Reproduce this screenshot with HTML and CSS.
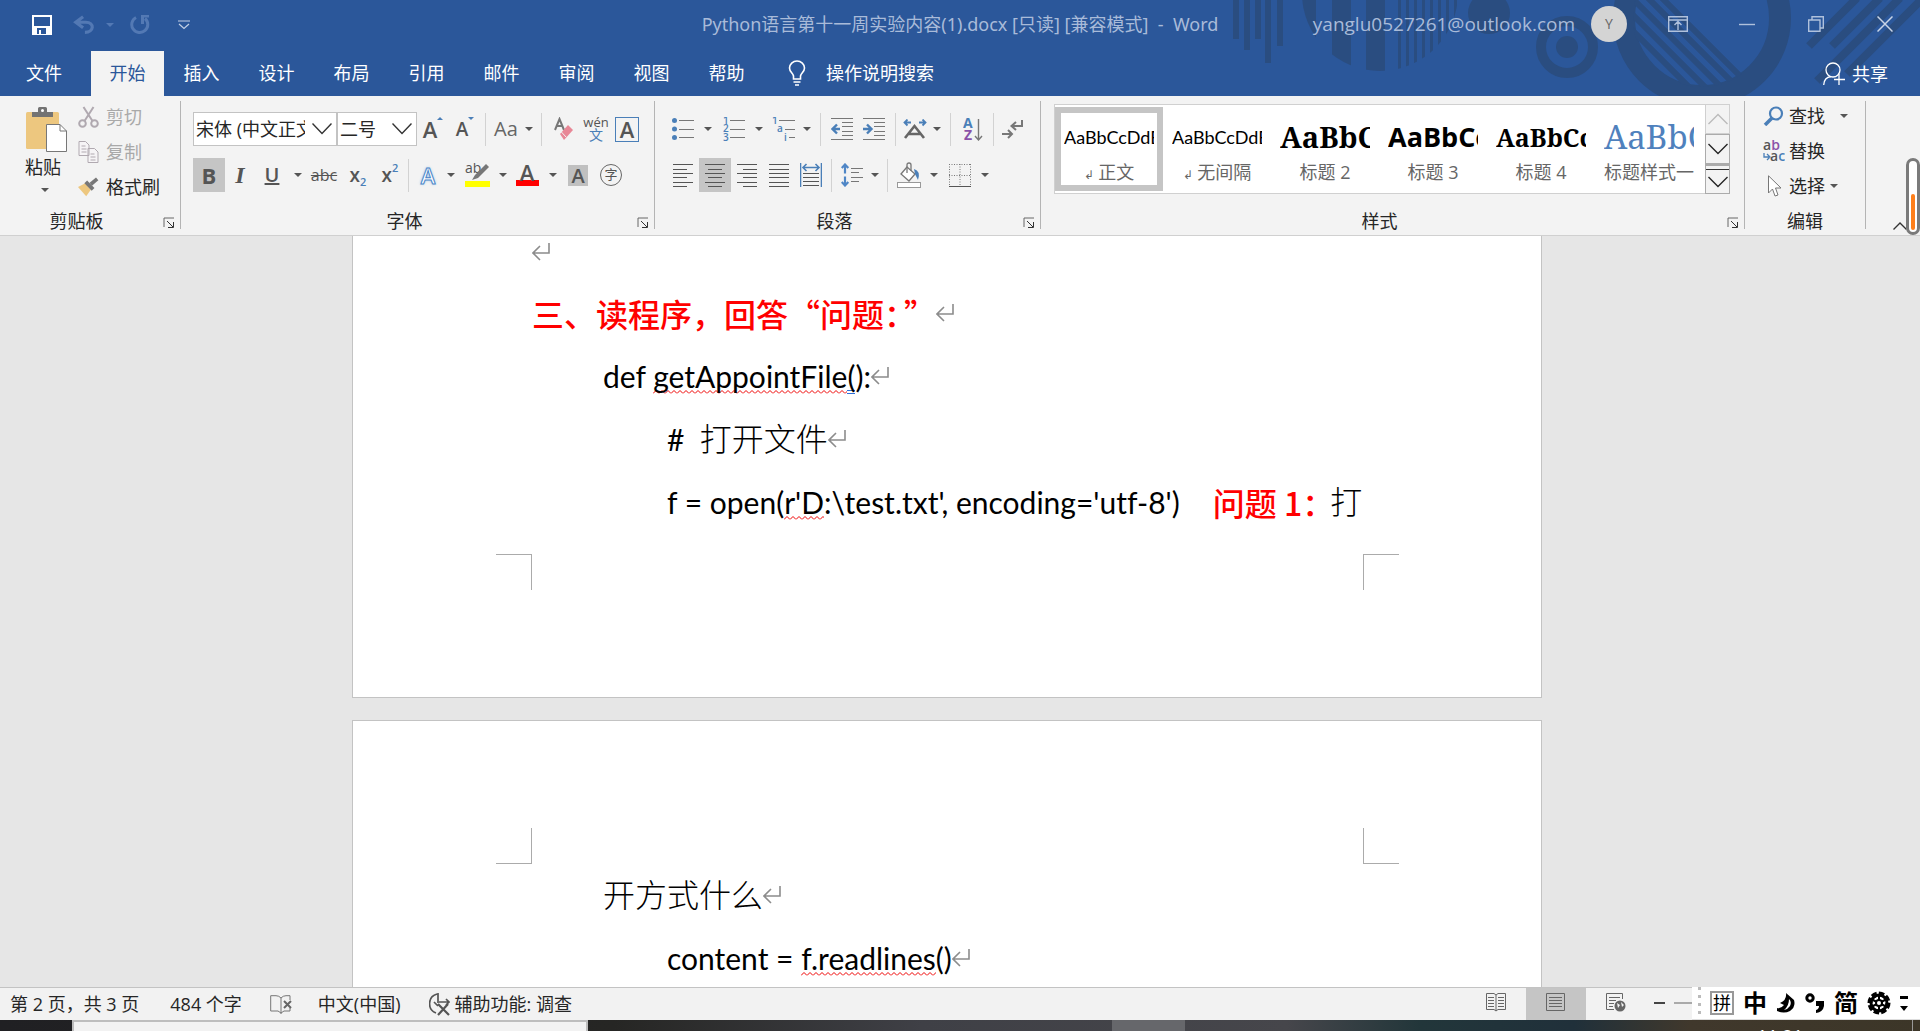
FILE: index.html
```html
<!DOCTYPE html>
<html lang="zh-CN">
<head>
<meta charset="utf-8">
<title>Python语言第十一周实验内容(1).docx - Word</title>
<link rel="stylesheet" href="styles.css">
</head>
<body>
<svg class="defs" aria-hidden="true">
  <symbol id="launcher" viewBox="0 0 12 12"><path d="M1 10V1H11" fill="none" stroke="#666"/><path d="M4 4L10 10M10.500 5V10.500H5" fill="none" stroke="#333"/></symbol>
  <symbol id="ret" viewBox="0 0 18 18"><path d="M17 0V10H2M8 3L1 10L8 17" fill="none" stroke="#8c8c8c" stroke-width="1.600"/></symbol>
  <symbol id="down" viewBox="0 0 20 12"><path d="M0.500 1L10 10.500L19.500 1" fill="none" stroke="currentColor" stroke-width="1.400"/></symbol>
</svg>

<header class="top">
  <svg class="art" width="700" height="96" viewBox="1220 0 700 96" aria-hidden="true">
    <defs>
      <clipPath id="c1"><circle cx="1380" cy="-7" r="78"/></clipPath>
      <clipPath id="c2"><circle cx="1702" cy="18" r="69"/></clipPath>
    </defs>
    <g fill="#2a4d80">
      <path d="M1233 0h6v39h-6zM1244 0h6v50h-6zM1255 0h6v39h-6zM1265 0h6v63h-6zM1277 0h6v46h-6z"/>
      <path clip-path="url(#c1)" d="M1302 0h14v90h-14zM1332 0h19v90h-19zM1366 0h19v90h-19zM1398 0h3v90h-3zM1406 0h3v90h-3zM1414 0h3v90h-3zM1422 0h3v90h-3zM1430 0h3v90h-3zM1438 0h3v90h-3zM1446 0h3v90h-3zM1454 0h3v90h-3z"/>
      <circle cx="1489" cy="13" r="21"/>
      <circle cx="1567" cy="47" r="11"/>
    </g>
    <g fill="none" stroke="#2a4d80">
      <circle cx="1567" cy="47" r="26" stroke-width="10"/>
      <circle cx="1702" cy="18" r="78" stroke-width="22"/>
      <path clip-path="url(#c2)" stroke-width="6" d="M1650 -14l110 110M1620 -30l120 120M1610 -24l120 120M1610 -8l110 110M1610 8l100 100"/>
      <path stroke-width="8" d="M1809 46L1857 -2M1832 46L1880 -2M1817 81L1900 -2M1847 74L1923 -2"/>
    </g>
  </svg>
  <div class="titlebar">
    <div class="qat">
      <button class="qbtn q-save" aria-label="保存"><svg width="20" height="20" viewBox="0 0 20 20"><path d="M1 1H19V19H1Z" fill="none" stroke="#fff" stroke-width="2"/><path d="M2 11H18V19H2Z" fill="#fff"/><path d="M5 13h9v6h-5v-4h-2v4h-2z" fill="#2b579a"/></svg></button>
      <button class="qbtn q-undo" aria-label="撤消"><svg width="22" height="20" viewBox="0 0 24 20"><path d="M11 1L3 7L11 13M3 7H14C24 7 23 18 13 18" fill="none" stroke="#5379b4" stroke-width="3.500"/></svg><span class="caret faint"></span></button>
      <button class="qbtn q-redo" aria-label="重复"><svg width="20" height="20" viewBox="0 0 20 20"><path d="M6 2.500A8 8 0 1 0 15 3.500" fill="none" stroke="#5379b4" stroke-width="3"/><path d="M11 1H19M12.500 1V9" fill="none" stroke="#5379b4" stroke-width="3"/></svg></button>
      <button class="qbtn q-more" aria-label="自定义快速访问工具栏"><svg width="12" height="10" viewBox="0 0 12 10"><path d="M0 1H12M1 4L6 8.500L11 4" fill="none" stroke="#c3d0e5" stroke-width="1.200"/></svg></button>
    </div>
    <div class="doc-title">Python语言第十一周实验内容(1).docx [只读] [兼容模式]&nbsp; -&nbsp; Word</div>
    <div class="right">
      <div class="account"><span>yanglu0527261@outlook.com</span><span class="avatar">Y</span></div>
      <div class="winbtns">
        <button aria-label="功能区显示选项"><svg width="20" height="16" viewBox="0 0 20 16"><path d="M.7 .7H19.300V15.300H.7ZM.7 4H19.300M10 14V6M6.500 9L10 5.500L13.500 9" fill="none" stroke="#b0c1dc" stroke-width="1.400"/></svg></button>
        <button aria-label="最小化"><svg width="16" height="16" viewBox="0 0 16 16"><path d="M0 8.500H16" stroke="#b0c1dc" stroke-width="1.400"/></svg></button>
        <button aria-label="还原"><svg width="16" height="16" viewBox="0 0 16 16"><path d="M.7 4H12V15.300H.7ZM4 4V.7H15.300V12H12" fill="none" stroke="#b0c1dc" stroke-width="1.400"/></svg></button>
        <button aria-label="关闭"><svg width="16" height="16" viewBox="0 0 16 16"><path d="M.5 .5L15.500 15.500M15.500 .5L.5 15.500" stroke="#c8d4e7" stroke-width="1.500"/></svg></button>
      </div>
    </div>
  </div>
  <nav class="tabs">
    <button class="tab file">文件</button><button class="tab active">开始</button><button class="tab">插入</button><button class="tab">设计</button><button class="tab">布局</button><button class="tab">引用</button><button class="tab">邮件</button><button class="tab">审阅</button><button class="tab">视图</button><button class="tab">帮助</button>
    <button class="tell"><svg width="18" height="26" viewBox="0 0 18 26"><path d="M5.500 19V16C5 13 1.500 12 1.500 8A7.500 7 0 0 1 16.500 8C16.500 12 13 13 12.500 16V19ZM5.500 22H12.500M7 25H11" fill="none" stroke="#fff" stroke-width="1.600"/></svg>操作说明搜索</button>
    <button class="share"><svg width="22" height="24" viewBox="0 0 22 24"><circle cx="10" cy="8" r="7" fill="none" stroke="#fff" stroke-width="1.300"/><path d="M.7 23C1 18 4 15 8 14.500M16 12V23M11 17.500H22" fill="none" stroke="#fff" stroke-width="1.300"/></svg>共享</button>
  </nav>
</header>

<section class="ribbon">
  <div class="group g-clip">
    <div class="body clip">
      <button class="paste"><svg width="42" height="46" viewBox="0 0 42 46"><rect x="0" y="5" width="33" height="37" rx="1.500" fill="#edc77f"/><path d="M6 10V5H12V1.500Q12 0 13.500 0H19.500Q21 0 21 1.500V5H27V10Z" fill="#737373"/><circle cx="16.500" cy="3.500" r="1.500" fill="#fff"/><path d="M20.500 17.500H34L40.500 24V44.500H20.500Z" fill="#fff" stroke="#777"/><path d="M34 17.500V24H40.500" fill="none" stroke="#777"/></svg><span>粘贴</span><span class="caret"></span></button>
      <div class="clip-list">
        <button class="cmd off"><svg width="20" height="22" viewBox="0 0 20 22"><g fill="none" stroke="#b0a9b0" stroke-width="2"><circle cx="4" cy="17.500" r="3.300"/><circle cx="16" cy="17.500" r="3.300"/><path d="M5 1L14 15M15 1L6 15"/></g></svg>剪切</button>
        <button class="cmd off"><svg width="20" height="22" viewBox="0 0 20 22"><g fill="#f6f4f6" stroke="#b0a9b0"><path d="M.5 .5H7L10.500 4V14.500H.5ZM9.500 7.500H16L19.500 11V21.500H9.500Z"/><path d="M3 5H7M3 8H8M3 11H8M12 13H16M12 16H17M12 19H17"/></g></svg>复制</button>
        <button class="cmd"><svg width="23" height="20" viewBox="0 0 23 20"><path d="M0 10L8 6L14 13L9 20Z" fill="#edc77f"/><path d="M7 6L10 3L18 11L15 14Z" fill="#777"/><path d="M14 7L21 1" stroke="#777" stroke-width="4"/></svg>格式刷</button>
      </div>
    </div>
    <div class="label">剪贴板<button class="launch" aria-label="剪贴板选项"><svg width="12" height="12"><use href="#launcher"/></svg></button></div>
  </div>

  <div class="group g-font">
    <div class="body rows">
      <div class="row">
        <select class="combo c-name" aria-label="字体"><option>宋体 (中文正文)</option></select><select class="combo c-size" aria-label="字号"><option>二号</option></select>
        <button class="tool w32 big" aria-label="增大字号">A<i class="up"></i></button>
        <button class="tool w32 mid" aria-label="减小字号">A<i class="dn"></i></button>
        <span class="sep w8"></span>
        <button class="tool w34 aa">Aa</button><button class="tool w12" aria-label="更改大小写选项"><span class="caret"></span></button>
        <span class="sep w12"></span>
        <button class="tool w34" aria-label="清除所有格式"><svg width="20" height="24" viewBox="0 0 20 24"><path d="M1 13L5.500 2L10 13M3 9H8" fill="none" stroke="#777" stroke-width="2"/><path d="M6 17L14 8L19 13L10 23Z" fill="#e88796"/><path d="M6.500 14L12 20" stroke="#f2f2f2"/></svg></button>
        <button class="tool w30 wen"><span>wén</span><b>文</b></button>
        <button class="tool w32" aria-label="字符边框"><span class="abox">A</span></button>
      </div>
      <div class="row">
        <button class="tool w32 on bold">B</button>
        <button class="tool w30 ital">I</button>
        <button class="tool w34 und">U</button><button class="tool w18" aria-label="下划线选项"><span class="caret"></span></button>
        <button class="tool w34 strike">abc</button>
        <button class="tool w34 xs">x<sub>2</sub></button>
        <button class="tool w30 xs">x<sup>2</sup></button>
        <span class="sep w6"></span>
        <button class="tool w34 glow">A</button><button class="tool w12" aria-label="文本效果选项"><span class="caret"></span></button>
        <button class="tool w40" aria-label="突出显示"><svg width="25" height="24" viewBox="0 0 25 24"><text x="0" y="10" class="ic-ab">ab</text><path d="M7 17L10 12L21 1L24 4L13 15Z" fill="#777"/><path d="M0 18H25V24H0Z" fill="#ff0"/></svg></button><button class="tool w12" aria-label="突出显示选项"><span class="caret"></span></button>
        <button class="tool w36 fcolor">A</button><button class="tool w16" aria-label="字体颜色选项"><span class="caret"></span></button>
        <button class="tool w34"><span class="shade">A</span></button>
        <button class="tool w32"><span class="circ">字</span></button>
      </div>
    </div>
    <div class="label">字体<button class="launch" aria-label="字体选项"><svg width="12" height="12"><use href="#launcher"/></svg></button></div>
  </div>

  <div class="group g-para">
    <div class="body rows">
      <div class="row">
        <button class="tool w32" aria-label="项目符号"><svg width="22" height="24" viewBox="0 0 22 24"><g fill="#4a7fb8"><circle cx="2.500" cy="3.500" r="2.500"/><circle cx="2.500" cy="12" r="2.500"/><circle cx="2.500" cy="20.500" r="2.500"/></g><path d="M7 3.500H22M7 12.500H22M7 20.500H22" stroke="#777"/></svg></button><button class="tool w18" aria-label="项目符号选项"><span class="caret"></span></button>
        <button class="tool w34" aria-label="编号"><svg width="22" height="24" viewBox="0 0 22 24"><g class="ic-n"><text x="0" y="7">1</text><text x="0" y="15">2</text><text x="0" y="24">3</text></g><path d="M7 3.500H22M7 12.500H22M7 20.500H22" stroke="#777"/></svg></button><button class="tool w16" aria-label="编号选项"><span class="caret"></span></button>
        <button class="tool w34" aria-label="多级列表"><svg width="24" height="24" viewBox="0 0 24 24"><g class="ic-n"><text x="0" y="7">1</text><text x="5" y="15">a</text><text x="12" y="24">i</text></g><path d="M7 3.500H23M13 12.500H23M17 20.500H23" stroke="#777"/></svg></button><button class="tool w12" aria-label="多级列表选项"><span class="caret"></span></button>
        <span class="sep w14"></span>
        <button class="tool w30" aria-label="减少缩进量"><svg width="22" height="24" viewBox="0 0 22 24"><path d="M0 1.500H22M11 5.500H22M11 9.500H22M11 14.500H22M11 18.500H22M0 22.500H22" stroke="#777"/><path d="M9 12H2M6 7.500L1.500 12L6 16.500" fill="none" stroke="#4a7fb8" stroke-width="2.400"/></svg></button>
        <button class="tool w34" aria-label="增加缩进量"><svg width="22" height="24" viewBox="0 0 22 24"><path d="M0 1.500H22M11 5.500H22M11 9.500H22M11 14.500H22M11 18.500H22M0 22.500H22" stroke="#777"/><path d="M0 12H7M4 7.500L8.500 12L4 16.500" fill="none" stroke="#4a7fb8" stroke-width="2.400"/></svg></button>
        <span class="sep w8"></span>
        <button class="tool w32" aria-label="中文版式"><svg width="24" height="20" viewBox="0 0 24 20"><path d="M2 19L11.500 7L21 19M6 15H17" fill="none" stroke="#666" stroke-width="2.600"/><path d="M8 3.500H1.500M4.500 .5L1.500 3.500L4.500 6.500M16 3.500H22.500M19.500 .5L22.500 3.500L19.500 6.500" fill="none" stroke="#4a7fb8" stroke-width="1.800"/></svg></button><button class="tool w12" aria-label="中文版式选项"><span class="caret"></span></button>
        <span class="sep w14"></span>
        <button class="tool w32" aria-label="排序"><svg width="20" height="24" viewBox="0 0 20 24"><text x="0" y="11" class="ic-az" fill="#4a7fb8">A</text><text x="1" y="23" class="ic-az" fill="#8a52a8">Z</text><path d="M15.500 2V23M12 19L15.500 23L19 19" fill="none" stroke="#777" stroke-width="1.400"/></svg></button>
        <span class="sep w8"></span>
        <button class="tool w32" aria-label="显示编辑标记"><svg width="22" height="20" viewBox="0 0 22 20"><path d="M20 1V7H10M14 3L9.500 7L14 11M0 15H9M6 11L10 15L6 19" fill="none" stroke="#777" stroke-width="2"/></svg></button>
      </div>
      <div class="row">
        <button class="tool w32" aria-label="左对齐"><svg width="20" height="23" viewBox="0 0 20 23"><path d="M0 .5H20M0 5.500H14M0 9.500H20M0 13.500H14M0 18.500H20M0 22.500H14" stroke="#555"/></svg></button>
        <button class="tool w32 on" aria-label="居中"><svg width="20" height="23" viewBox="0 0 20 23"><path d="M0 .5H20M3 5.500H17M0 9.500H20M3 13.500H17M0 18.500H20M3 22.500H17" stroke="#555"/></svg></button>
        <button class="tool w32" aria-label="右对齐"><svg width="20" height="23" viewBox="0 0 20 23"><path d="M0 .5H20M6 5.500H20M0 9.500H20M6 13.500H20M0 18.500H20M6 22.500H20" stroke="#555"/></svg></button>
        <button class="tool w32" aria-label="两端对齐"><svg width="20" height="23" viewBox="0 0 20 23"><path d="M0 .5H20M0 5.500H20M0 9.500H20M0 13.500H20M0 18.500H20M0 22.500H20" stroke="#555"/></svg></button>
        <button class="tool w32" aria-label="分散对齐"><svg width="22" height="24" viewBox="0 0 22 24"><path d="M.5 0V24M21.500 0V24M3 4.500H19M6.500 1L3 4.500L6.500 8M15.500 1L19 4.500L15.500 8" fill="none" stroke="#4a7fb8" stroke-width="1.600"/><path d="M3 10.500H19M3 14.500H19M3 18.500H19M3 22.500H19" stroke="#555"/></svg></button>
        <span class="sep w8"></span>
        <button class="tool w34" aria-label="行距"><svg width="22" height="24" viewBox="0 0 22 24"><path d="M4 2V22M.7 5L4 1.500L7.300 5M.7 19L4 22.500L7.300 19" fill="none" stroke="#4f86c6" stroke-width="2.200"/><path d="M2 12H6" stroke="#f2f2f2" stroke-width="3"/><path d="M10 5.500H22M10 9.500H18M10 14.500H22M10 18.500H18" stroke="#777"/></svg></button><button class="tool w12" aria-label="行距选项"><span class="caret"></span></button>
        <span class="sep w12"></span>
        <button class="tool w32" aria-label="底纹"><svg width="24" height="26" viewBox="0 0 24 26"><path d="M10 5L18 12L12 19L4 12Z" fill="#fff" stroke="#777" stroke-width="1.300"/><path d="M10 11V3Q10 1 12 1T14 3V9" fill="none" stroke="#777" stroke-width="1.300"/><path d="M17 7Q24 9 21 18Q19 14 18 12Z" fill="#4a7fb8"/><rect x=".5" y="20.500" width="23" height="5" fill="#fff" stroke="#999"/></svg></button><button class="tool w18" aria-label="底纹选项"><span class="caret"></span></button>
        <button class="tool w34" aria-label="边框"><svg width="22" height="23" viewBox="0 0 22 23"><path d="M.5 0V22M21.500 0V22M11 0V22M0 .5H22M0 11.500H22" fill="none" stroke="#777" stroke-dasharray="1 1.500"/><path d="M0 22.500H22" stroke="#555"/></svg></button><button class="tool w16" aria-label="边框选项"><span class="caret"></span></button>
      </div>
    </div>
    <div class="label">段落<button class="launch" aria-label="段落选项"><svg width="12" height="12"><use href="#launcher"/></svg></button></div>
  </div>

  <div class="group g-style">
    <div class="body gal-wrap">
      <div class="gallery">
        <button class="style sel"><span class="s-n">AaBbCcDdEe</span><small><i>↲</i> 正文</small></button>
        <button class="style"><span class="s-n">AaBbCcDdEe</span><small><i>↲</i> 无间隔</small></button>
        <button class="style"><span class="s-2">AaBbC</span><small>标题 2</small></button>
        <button class="style"><span class="s-3">AaBbCc</span><small>标题 3</small></button>
        <button class="style"><span class="s-4">AaBbCc</span><small>标题 4</small></button>
        <button class="style"><span class="s-5">AaBbC</span><small>标题样式一</small></button>
      </div>
      <div class="gal-nav">
        <button class="dim" aria-label="上一行"><svg class="flip" width="20" height="12"><use href="#down"/></svg></button>
        <button aria-label="下一行"><svg width="20" height="12"><use href="#down"/></svg></button>
        <button class="more" aria-label="其他"><svg width="20" height="12"><use href="#down"/></svg></button>
      </div>
    </div>
    <div class="label">样式<button class="launch" aria-label="样式选项"><svg width="12" height="12"><use href="#launcher"/></svg></button></div>
  </div>

  <div class="group g-edit">
    <div class="body edit-list">
      <button class="cmd"><svg width="22" height="20" viewBox="0 0 22 20"><circle cx="13" cy="7.500" r="6" fill="none" stroke="#4a7fb8" stroke-width="2.200"/><path d="M9 12L2 19" stroke="#4a7fb8" stroke-width="3.500"/></svg>查找<span class="caret far"></span></button>
      <button class="cmd"><svg width="22" height="22" viewBox="0 0 22 22"><text x="0" y="10" class="ic-r" fill="#555">a<tspan fill="#8a52a8">b</tspan></text><text x="7" y="21" class="ic-r" fill="#555">a<tspan fill="#4a7fb8">c</tspan></text><path d="M1 13V17H6M4 14L7 17L4 20" fill="none" stroke="#4a7fb8" stroke-width="1.300"/></svg>替换</button>
      <button class="cmd"><svg width="22" height="22" viewBox="0 0 22 22"><path d="M5.500 .8V18L9.500 14L12 21L15 20L12.500 13H18Z" fill="#fff" stroke="#777"/></svg>选择<span class="caret near"></span></button>
    </div>
    <div class="label">编辑</div>
  </div>
  <button class="collapse" aria-label="折叠功能区"><svg width="14" height="8" viewBox="0 0 14 8"><path d="M.5 7.500L7 1L13.500 7.500" fill="none" stroke="#333" stroke-width="1.400"/></svg></button>
  <span class="gauge"><i></i></span>
</section>

<main class="canvas">
  <article class="page first">
    <p class="ln top1"><svg class="ret" width="18" height="18"><use href="#ret"/></svg></p>
    <p class="ln head">三、读程序，回答<span class="q">“</span>问题<span class="cl">：</span><span class="q">”</span><svg class="ret" width="18" height="18"><use href="#ret"/></svg></p>
    <p class="ln in1">def <span class="sq">getAppointFile</span><span class="gr">(</span>):<svg class="ret" width="18" height="18"><use href="#ret"/></svg></p>
    <p class="ln in2"># &nbsp;<span class="cj">打开文件</span><svg class="ret" width="18" height="18"><use href="#ret"/></svg></p>
    <p class="ln in2">f = open(<span class="sq">r'D</span>:\test.txt', encoding='utf-8')<span class="ask">问题 1：</span><span class="cj">打</span></p>
    <div class="crops foot"><i></i><i></i></div>
  </article>
  <article class="page second">
    <div class="crops hd"><i></i><i></i></div>
    <p class="ln in1"><span class="cj">开方式什么</span><svg class="ret" width="18" height="18"><use href="#ret"/></svg></p>
    <p class="ln in2">content = <span class="sq">f.readlines</span>()<svg class="ret" width="18" height="18"><use href="#ret"/></svg></p>
  </article>
</main>

<footer class="status">
  <span class="st s1">第 2 页，共 3 页</span>
  <span class="st s2">484 个字</span>
  <svg class="st s3" width="22" height="19" viewBox="0 0 22 19"><path d="M11 3V19M11 3Q9 .7 6 .7H.7V16H8L11 18L14 16H20V13M11 3Q13 .7 16 .7H20V5" fill="none" stroke="#777"/><path d="M14 6L21 13M21 6L14 13" stroke="#666" stroke-width="2"/></svg>
  <span class="st s4">中文(中国)</span>
  <span class="st s5"><svg width="21" height="23" viewBox="0 0 21 23"><path d="M8 1A10 10 0 0 0 7 20M9 0V10M5 9L9 13M10 9H20M17 6L20 9L17 12" fill="none" stroke="#555" stroke-width="1.700"/><path d="M9 11L20 22M19 11L9 22" stroke="#555" stroke-width="2.200"/></svg>辅助功能: 调查</span>
  <div class="views">
    <button aria-label="阅读视图"><svg width="20" height="19" viewBox="0 0 20 19"><path d="M.5 .5H8L10 2L12 .5H19.500V16.500H12L10 18L8 16.500H.5ZM10 2V18M2 4.500H8M2 7.500H8M2 10.500H8M2 13.500H8M12 4.500H18M12 7.500H18M12 10.500H18M12 13.500H18" fill="none" stroke="#666"/></svg></button>
    <button class="on" aria-label="页面视图"><svg width="20" height="19" viewBox="0 0 20 19"><path d="M.5 .5H18.500V17.500H.5ZM3 4.500H16M3 7.500H16M3 10.500H16M3 13.500H16" fill="none" stroke="#666"/></svg></button>
    <button aria-label="Web 版式视图"><svg width="20" height="19" viewBox="0 0 20 19"><path d="M8 16.500H.5V.5H16.500V6M3 4.500H14M3 7.500H10M3 10.500H8M3 13.500H7" fill="none" stroke="#666"/><circle cx="14" cy="13" r="5.500" fill="#666"/><path d="M11 10L14 12L12 15ZM15 9L18 12L16 14Z" fill="#f2f2f2"/></svg></button>
  </div>
  <span class="zoom"></span>
  <div class="ime">
    <i class="grip"></i><span class="pin">拼</span><b>中</b>
    <svg width="20" height="22" viewBox="0 0 20 22"><path d="M10 1L18 8Q20 15 14 19Q8 22 1 19V16Q5 17 8 13L4 11Q11 8 10 1Z"/><path d="M13 7Q16 10 14 14Q12 17 8 18Q13 14 13 7Z" fill="#fff"/></svg>
    <svg width="20" height="22" viewBox="0 0 20 22"><circle cx="5" cy="6" r="3.200" fill="none" stroke="#000" stroke-width="3"/><path d="M11 9H19V14Q18 20 11 21V18Q14 17 14 14H11Z"/></svg>
    <b>简</b>
    <svg width="24" height="24" viewBox="0 0 24 24"><circle cx="12" cy="12" r="9" fill="none" stroke="#000" stroke-width="5" stroke-dasharray="5 2"/><circle cx="12" cy="12" r="8" fill="none" stroke="#000" stroke-width="3"/><path d="M12 3V21M4 8L20 16M20 8L4 16" stroke="#000" stroke-width="2"/><circle cx="12" cy="12" r="3" fill="#fff" stroke="#000" stroke-width="2"/></svg>
    <svg width="8" height="16" viewBox="0 0 8 16"><path d="M0 1H8V4H0ZM0 11H8L4 16Z"/></svg>
  </div>
</footer>
<div class="taskbar"><div class="search"></div><div class="task"></div><time>11:21</time><i class="peek"></i></div>
</body>
</html>
```
FILE: styles.css
```css
* { box-sizing: border-box; }
html, body { margin: 0; height: 100%; }
body {
  display: flex; flex-direction: column; height: 100vh; overflow: hidden;
  font: 18px/24px "Open Sans", "Noto Sans CJK SC", sans-serif; color: #262626; background: #e6e6e6;
}
button { font: inherit; color: inherit; background: none; border: 0; padding: 0; margin: 0; white-space: nowrap; }
svg { flex: none; display: block; }
.defs { position: absolute; width: 0; height: 0; }
i { font-style: normal; }

.caret { width: 0; height: 0; border: 4px solid transparent; border-top-color: #555; border-bottom: 0; flex: none; }
.caret.faint { border-top-color: #5379b4; }

/* title bar and tabs */
.top { position: relative; flex: none; background: #2b579a; color: #fff; }
.art { position: absolute; right: 0; top: 0; }
.titlebar { position: relative; display: flex; align-items: center; height: 51px; padding-bottom: 4px; }
.qat { display: flex; align-items: center; flex: 1 1 0; min-width: 0; padding-left: 32px; padding-top: 2px; }
.qbtn { display: flex; align-items: center; }
.q-undo { margin-left: 21px; gap: 11px; }
.q-redo { margin-left: 16px; }
.q-more { margin-left: 28px; }
.doc-title { color: #a9bbd9; white-space: nowrap; font-family: "Noto Sans", "Noto Sans CJK SC", sans-serif; }
.right { display: flex; align-items: center; justify-content: flex-end; flex: 1 1 0; min-width: 0; padding-left: 32px; }
.account { display: flex; align-items: center; gap: 16px; color: #a9bbd9; font-size: 19px; }
.avatar { width: 36px; height: 36px; border-radius: 50%; background: #d4d4d4; color: #666; font-size: 14px; line-height: 36px; text-align: center; }
.winbtns { display: flex; padding-left: 16px; padding-right: 1px; }
.winbtns button { width: 69px; display: flex; justify-content: center; }
.tabs { position: relative; display: flex; height: 45px; }
.tab { width: 75px; padding-bottom: 2px; }
.tab.file { width: 91px; padding-right: 3px; }
.tab.active { width: 73px; background: #f3f3f3; color: #2b579a; }
.tell { display: flex; align-items: center; gap: 20px; margin-left: 24px; padding-bottom: 2px; }
.share { display: flex; align-items: center; gap: 7px; margin-left: auto; margin-right: 32px; }

/* ribbon */
.ribbon { position: relative; display: flex; flex: none; height: 140px; background: #f3f3f3; border-bottom: 1px solid #d0d0d0; padding-top: 5px; }
.group { display: flex; flex-direction: column; height: 128px; border-right: 1px solid #b4b4b4; }
.body { flex: 1; min-height: 0; }
.label { position: relative; height: 22px; line-height: 28px; text-align: center; }
.g-clip { width: 181px; }
.g-clip .label { padding-right: 27px; }
.g-font { width: 474px; }
.g-font .label { padding-right: 26px; }
.g-para { width: 386px; }
.g-para .label { padding-right: 26px; }
.g-style { flex: 1; min-width: 0; }
.g-style .label { padding-right: 26px; }
.g-edit { width: 121px; }
.launch { position: absolute; right: 5px; top: 10px; }

.clip { display: flex; }
.paste { width: 78px; padding: 6px 0 0 8px; display: flex; flex-direction: column; align-items: center; }
.paste svg { margin-left: 8px; }
.paste span { margin-top: 2px; }
.paste .caret { margin-top: 9px; margin-left: 4px; }
.clip-list { display: flex; flex-direction: column; }
.cmd { display: flex; align-items: center; height: 35px; gap: 7px; }
.clip-list .cmd { padding-bottom: 3px; }
.clip-list svg { width: 21px; }
.off { color: #a9a9a9; }
.edit-list { padding-left: 18px; display: flex; flex-direction: column; align-items: flex-start; }
.edit-list .cmd { padding-bottom: 5px; gap: 4px; }
.far { margin-left: 11px; }
.near { margin-left: 1px; }

.rows { padding: 11px 0 0 12px; display: flex; flex-direction: column; gap: 12px; }
.row { display: flex; align-items: center; height: 34px; flex: none; }
.combo { appearance: none; height: 34px; border: 1px solid #c3c3c3; border-radius: 0; font: inherit; color: #262626; padding: 0 31px 0 2px; background: #fff url("data:image/svg+xml,%3Csvg xmlns='http://www.w3.org/2000/svg' width='20' height='12'%3E%3Cpath d='M.5 .5L10 10.500L19.500 .5' fill='none' stroke='%23333' stroke-width='1.400'/%3E%3C/svg%3E") no-repeat right 4px center; }
.c-name { width: 144px; }
.c-size { width: 80px; }
.tool { display: flex; align-items: center; justify-content: center; height: 34px; color: #555; flex: none; }
.tool.on { background: #c5c5c5; }
.w6 { width: 6px; } .w8 { width: 8px; } .w12 { width: 12px; } .w14 { width: 14px; } .w16 { width: 16px; } .w18 { width: 18px; }
.w30 { width: 30px; } .w32 { width: 32px; } .w34 { width: 34px; } .w36 { width: 36px; } .w40 { width: 40px; }
.sep { height: 33px; display: flex; justify-content: center; flex: none; }
.sep::before { content: ""; width: 1px; background: #d2d2d2; }
.big { font-size: 22px; font-weight: 600; }
.mid { font-size: 19px; font-weight: 600; }
.up, .dn { border: 3px solid transparent; align-self: flex-start; margin-top: 5px; }
.up { border-bottom-color: #4a7fb8; border-top: 0; }
.dn { border-top-color: #4a7fb8; border-bottom: 0; }
.aa { font-size: 20px; color: #666; }
.wen { flex-direction: column; font-size: 13px; line-height: 10px; }
.wen b { font-weight: 400; font-size: 14px; line-height: 15px; color: #4a7fb8; }
.abox { border: 1px solid #4a7fb8; width: 24px; height: 25px; line-height: 23px; font-weight: 600; font-size: 22px; }
.bold { font-weight: 700; font-size: 22px; }
.ital { font: italic 700 24px "Liberation Serif", serif; }
.und { font-size: 20px; font-weight: 600; text-decoration: underline; }
.strike { font-size: 16px; text-decoration: line-through; }
.xs { font-size: 19px; font-weight: 600; }
.xs sub, .xs sup { font-size: 11px; line-height: 11px; color: #4a7fb8; }
.xs sub { align-self: flex-end; padding-bottom: 5px; }
.xs sup { align-self: flex-start; padding-top: 4px; }
.glow { font-size: 22px; color: #fff; -webkit-text-stroke: 1px #4a86c8; text-shadow: 0 0 3px #7fb0e6; font-weight: 600; }
.fcolor { font-size: 22px; font-weight: 600; background: linear-gradient(#f00, #f00) no-repeat center 22px / 23px 6px; padding-bottom: 6px; }
.shade { background: #c0c0c0; width: 20px; height: 21px; line-height: 21px; font-weight: 600; font-size: 20px; }
.circ { width: 22px; height: 22px; border: 1px solid #666; border-radius: 50%; font-size: 13px; line-height: 19px; }
.ic-ab { font-size: 14px; fill: #555; }
.ic-n { font-size: 10px; font-weight: 600; fill: #4a7fb8; }
.ic-az { font-size: 14px; font-weight: 700; }
.ic-r { font-size: 14px; font-weight: 600; }

.gal-wrap { display: flex; padding: 3px 14px 0 13px; }
.gallery { flex: 1; min-width: 0; height: 90px; display: flex; align-items: center; overflow: hidden; background: #fff; border: 1px solid #d0d0d0; border-right: 0; }
.style { width: 108px; height: 84px; flex: none; padding: 4px 9px 0; display: flex; flex-direction: column; color: #000; }
.style.sel { outline: 6px solid #c5c5c5; outline-offset: -6px; }
.style > span { display: block; width: 90px; overflow: hidden; text-align: left; height: 49px; line-height: 52px; }
.style small { font-size: 18px; line-height: 24px; color: #666; width: 90px; text-align: center; }
.style small i { font-size: 12px; }
.style .s-n { font-family: Lato, sans-serif; font-size: 18px; }
.s-2, .s-4, .s-5 { font-family: "Noto Serif", "Liberation Serif", serif; }
.style .s-2 { font-size: 29px; font-weight: 700; }
.style .s-3 { font-size: 27px; font-weight: 700; }
.style .s-4 { font-size: 25px; font-weight: 700; }
.style .s-5 { font-size: 33px; color: #4f81bd; }
.gal-nav { width: 25px; height: 90px; display: flex; flex-direction: column; }
.gal-nav button { height: 30px; border: 1px solid #ababab; display: flex; align-items: center; justify-content: center; }
.gal-nav .dim { color: #bbb; border-color: #d0d0d0; }
.gal-nav .more { border-top: 2px solid #ababab; box-shadow: inset 0 3px #f3f3f3, inset 0 4px #333; padding-top: 5px; }
.flip { transform: rotate(180deg); }
.collapse { width: 54px; align-self: flex-end; display: flex; justify-content: flex-end; padding: 0 13px 5px 0; }
.gauge { position: absolute; right: 0; top: 62px; width: 14px; height: 77px; border: 3px solid #7a7a7a; border-radius: 7px; background: #fff; display: flex; align-items: flex-end; padding: 2px; }
.gauge i { width: 4px; height: 36px; background: #ff7f1a; border-radius: 2px; }

/* document */
.canvas { flex: 1; min-height: 0; overflow: hidden; padding-right: 26px; }
.page { width: 1190px; margin: 0 auto; background: #fff; border: 1px solid #c3c3c3; padding: 0 178px 0 179px; color: #000; }
.first { border-top: 0; padding-bottom: 107px; }
.second { margin-top: 22px; padding-top: 107px; height: 700px; }
.ln { margin: 0; height: 63px; padding-bottom: 2px; display: flex; align-items: center; white-space: pre; font: 30px/40px Lato, "Noto Sans CJK SC", sans-serif; font-variant-ligatures: none; }
.top1 { height: 46px; padding-bottom: 14px; }
.in1 { padding-left: 71px; }
.in2 { padding-left: 135px; }
.cj { font-size: 32px; font-weight: 300; }
.head, .ask { font-family: "Noto Sans CJK SC", sans-serif; font-weight: 500; font-size: 32px; color: #f00; }
.ask { margin: 0 -4px 0 33px; }
.cl { margin-right: -12px; }
.sq, .gr { background: url("data:image/svg+xml,%3Csvg xmlns='http://www.w3.org/2000/svg' width='6' height='4'%3E%3Cpath d='M0 3.500L3 .5L6 3.500' fill='none' stroke='%23e00'/%3E%3C/svg%3E") repeat-x left bottom 2px; }
.gr { background: linear-gradient(#2b6cd8 1px, transparent 1px 3px, #2b6cd8 3px) no-repeat left bottom 2px / 100% 4px; }
.crops { display: flex; justify-content: space-between; margin: 0 -36px; height: 36px; }
.crops i { width: 36px; border: 0 solid #ababab; }
.foot { margin-top: 20px; }
.foot i { border-top-width: 1px; }
.hd i { border-bottom-width: 1px; }
.crops i:first-child { border-right-width: 1px; }
.crops i:last-child { border-left-width: 1px; }

/* status bar */
.status { position: relative; flex: none; height: 33px; display: flex; align-items: center; background: #f2f2f2; border-top: 1px solid #c3c3c3; white-space: nowrap; padding-left: 10px; }
.s2 { margin-left: 31px; }
.s3 { margin-left: 28px; }
.s4 { margin-left: 26px; }
.s5 { margin-left: 29px; display: flex; align-items: center; gap: 4px; }
.views { margin-left: auto; display: flex; height: 32px; }
.views button { width: 60px; display: flex; justify-content: center; align-items: center; padding-bottom: 3px; }
.views .on { background: #c5c5c5; }
.zoom { width: 38px; height: 2px; margin: 0 228px 3px 8px; background: linear-gradient(90deg, #444 11px, transparent 11px 20px, #aaa 20px); }
.ime { position: absolute; right: 0; top: -1px; width: 228px; height: 33px; background: #fff; color: #000; display: flex; align-items: center; gap: 9px; padding-left: 6px; border-bottom: 1px solid #ddd; overflow: hidden; }
.ime b { font-size: 24px; line-height: 30px; font-weight: 700; width: 24px; }
.grip { width: 3px; height: 32px; background: repeating-linear-gradient(#bbb 0 3px, transparent 3px 8px); }
.pin { width: 24px; height: 24px; border: 2px solid #999; font-size: 18px; line-height: 20px; text-align: center; }
.taskbar { position: relative; flex: none; height: 11px; overflow: hidden; display: flex; background: linear-gradient(90deg, #202023, #262624 32%, #3f4046 48%, #46464b 67%, #22363a 74%, #20303a 82%, #40382c 88%, #3c3628); }
.search { width: 516px; margin-left: 72px; background: #f2f2f2; border: 2px solid #bdbdbd; border-bottom: 0; }
.task { width: 73px; margin-left: 524px; background: #66676b; }
.taskbar time { color: #fff; margin-left: auto; font-size: 18px; line-height: 26px; padding-top: 3px; }
.peek { width: 1px; background: #999; margin: 0 7px 0 109px; }
```
